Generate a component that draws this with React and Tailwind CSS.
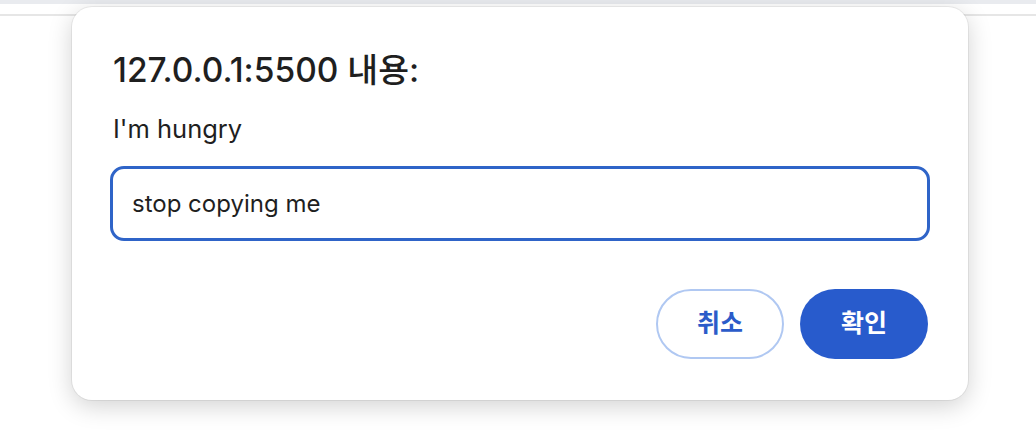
export default function App() {
  const font = { fontFamily: 'Inter, "Noto Sans CJK KR", "Noto Sans", sans-serif' };
  return (
    <div className="relative w-[1036px] h-[444px] bg-white overflow-hidden" style={font}>
      <div className="h-[4px] bg-[#e9ebef]" />
      <div className="mt-[10px] h-[2px] bg-[#e6e6e6]" />
      <div className="absolute left-[72px] top-[7px] w-[896px] h-[393px] bg-white rounded-[20px] shadow-[0_0_0_1px_rgba(0,0,0,0.06),0_6px_24px_rgba(0,0,0,0.18)] flex flex-col px-[38px]">
        <div className="mt-[44px] ml-[3px] text-[33.5px] leading-[38px] font-medium text-[#1f1f1f]">
          127.0.0.1:5500 내용:
        </div>
        <div className="mt-[24px] ml-[3px] text-[25.5px] leading-[32px] text-[#1f1f1f]">I'm hungry</div>
        <div className="mt-[21px] h-[75px] border-[3.5px] border-[#2f64c8] rounded-[14px] flex items-center px-[19px] text-[24px] text-[#1f1f1f]">
          stop copying me
        </div>
        <div className="mt-[48px] flex justify-end gap-[16px] pr-[2px]">
          <button className="w-[128px] h-[70px] rounded-full border-2 border-[#b0c8f2] bg-white text-[#2b5bc9] text-[25px] font-bold">
            취소
          </button>
          <button className="w-[128px] h-[70px] rounded-full bg-[#285bcc] text-white text-[25px] font-bold">
            확인
          </button>
        </div>
      </div>
    </div>
  );
}
